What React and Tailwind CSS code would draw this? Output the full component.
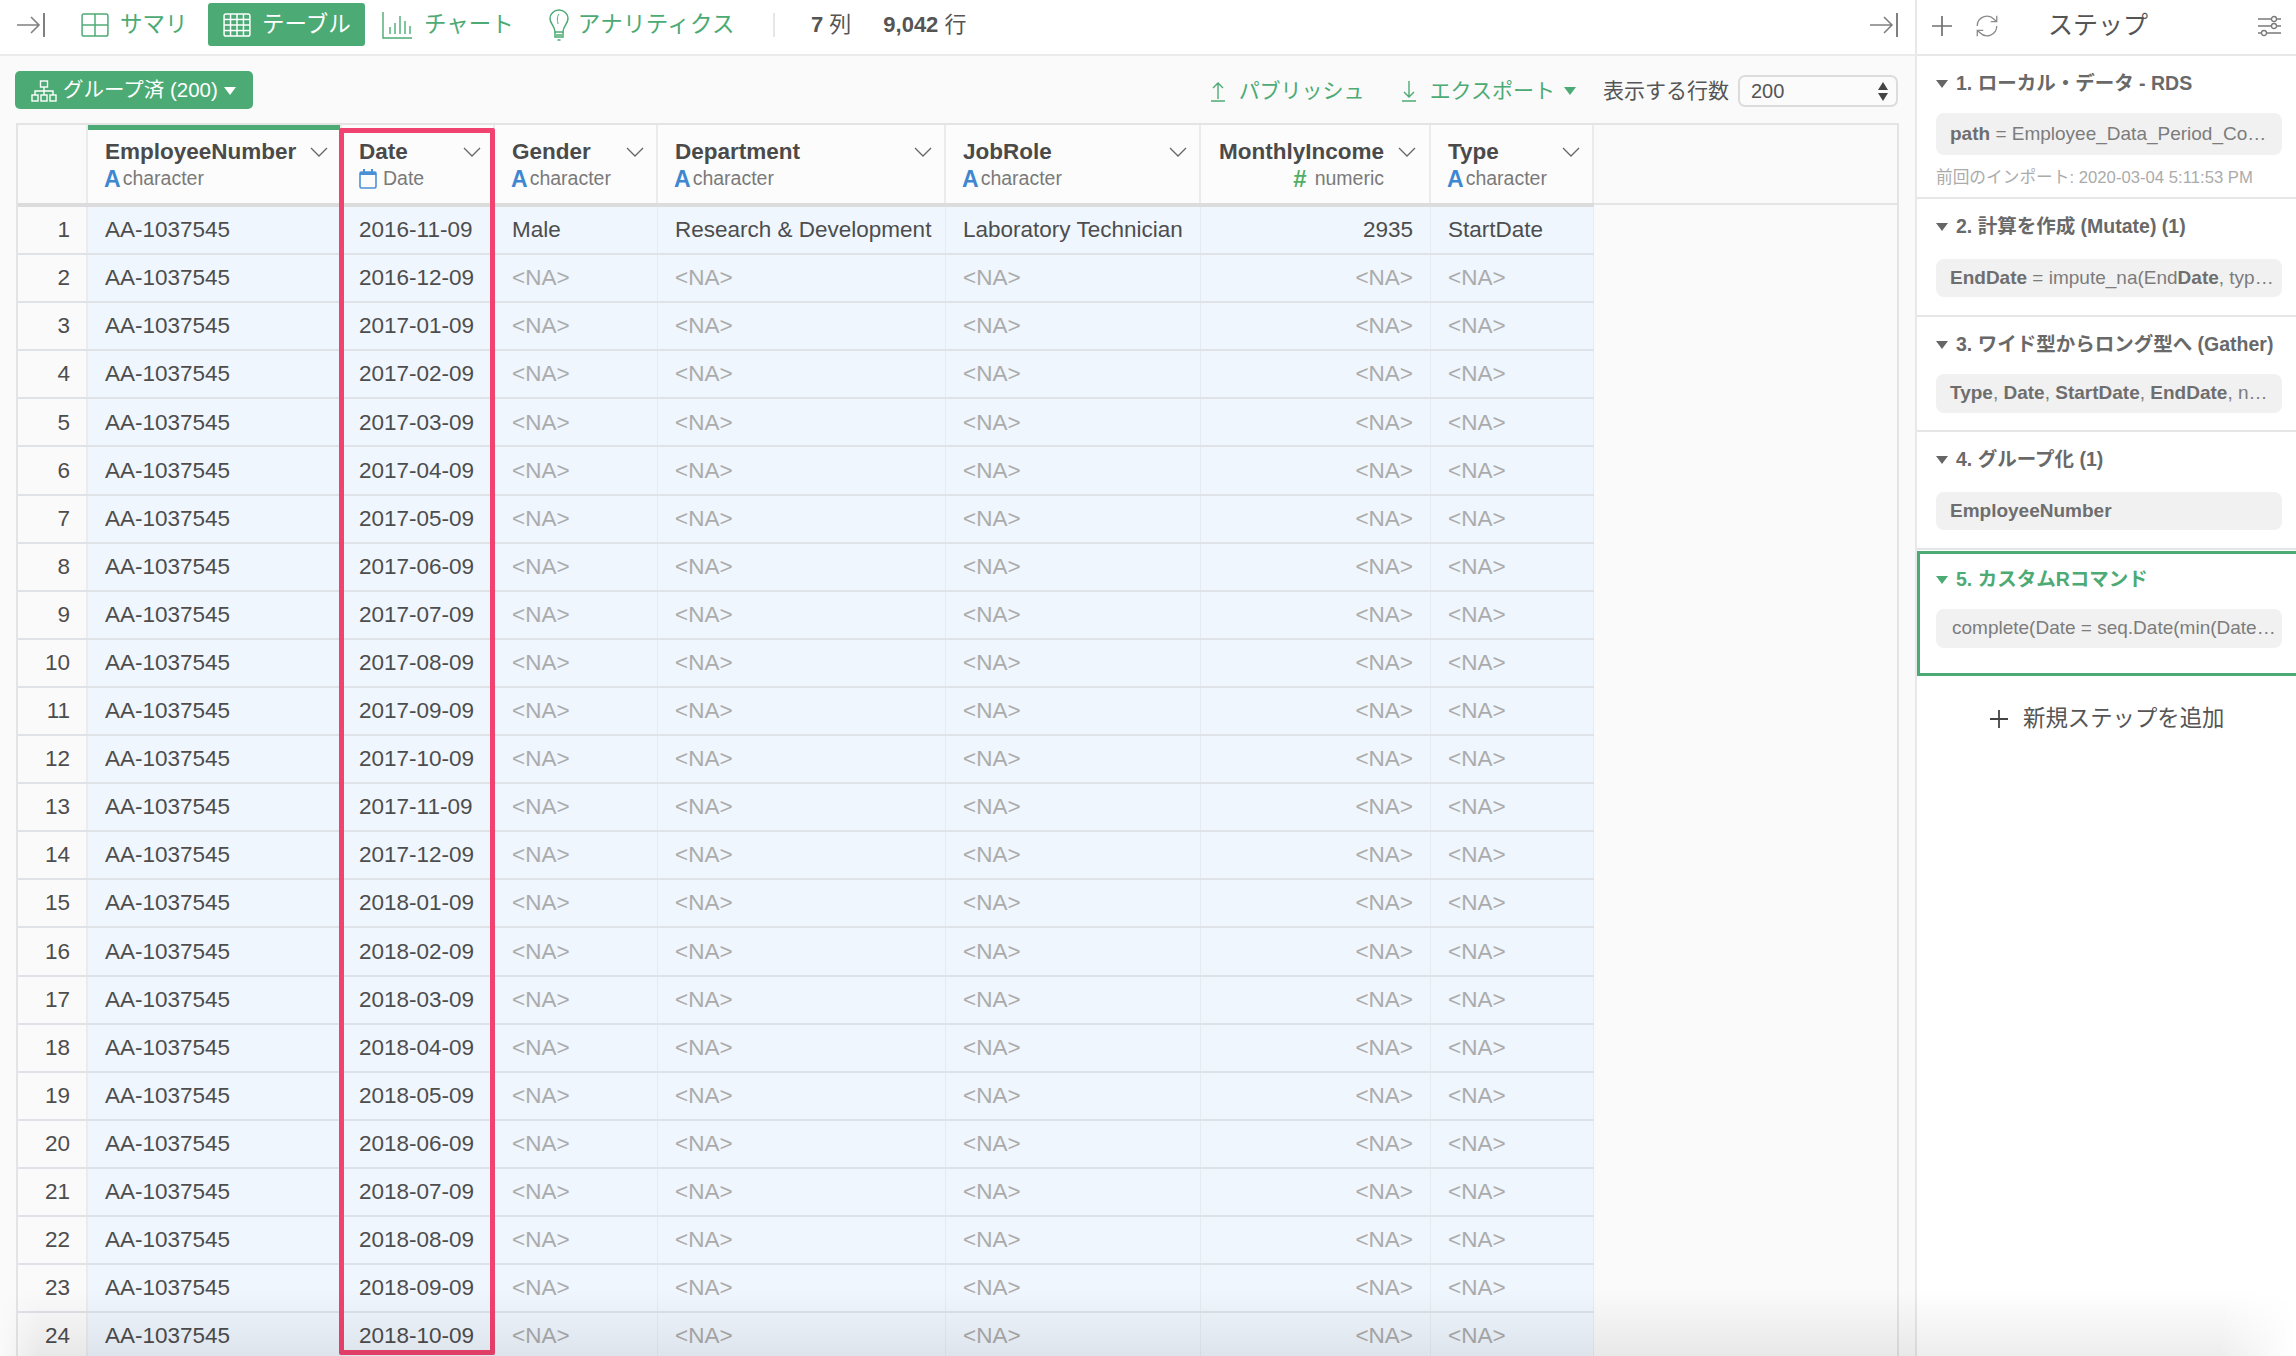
import React from "react";

const GREEN = "#4CAA74";

function ArrowEnd({ className }) {
  return (
    <svg className={className} width="30" height="24" viewBox="0 0 30 24" fill="none" stroke="#808080" strokeWidth="1.6">
      <path d="M1 12H23M15 4l8 8-8 8" />
      <path d="M28 0V24" strokeWidth="2" />
    </svg>
  );
}

function GridIcon({ cols, rows, color, w = 30, h = 26 }) {
  const xs = [...Array(cols - 1)].map((_, i) => ((i + 1) * w) / cols);
  const ys = [...Array(rows - 1)].map((_, i) => ((i + 1) * h) / rows);
  return (
    <svg width={w} height={h} viewBox={`-1 -1 ${w + 2} ${h + 2}`} fill="none" stroke={color} strokeWidth="1.6">
      <rect x="0" y="0" width={w} height={h} rx="2" />
      {xs.map((x) => <path key={x} d={`M${x} 0V${h}`} />)}
      {ys.map((y) => <path key={y} d={`M0 ${y}H${w}`} />)}
    </svg>
  );
}

function ChartIcon() {
  return (
    <svg width="30" height="28" viewBox="0 0 30 28" fill="none" stroke={GREEN} strokeWidth="1.4">
      <path d="M1 1V27H30" />
      <path d="M8 23V16M13 23V12M18 23V5M23 23V10M28 23V15" />
    </svg>
  );
}

function BulbIcon() {
  return (
    <svg width="22" height="32" viewBox="0 0 22 32" fill="none" stroke={GREEN} strokeWidth="1.5">
      <path d="M7 23C7 17 2 15 2 9.500A9 8.500 0 0 1 20 9.500C20 15 15 17 15 23Z" />
      <path d="M7 23V28H15V23M8 26H14M9.500 31H12.500" />
      <path d="M11 5C8.500 8 9.500 12 10 15" strokeWidth="1" />
    </svg>
  );
}

function SitemapIcon() {
  return (
    <svg width="26" height="22" viewBox="0 0 26 22" fill="none" stroke="#fff" strokeWidth="1.4">
      <rect x="9.500" y="1" width="7" height="6" />
      <rect x="1" y="15" width="6" height="6" />
      <rect x="10" y="15" width="6" height="6" />
      <rect x="19" y="15" width="6" height="6" />
      <path d="M13 7V15M4 15V11H22V15" />
    </svg>
  );
}

function Chevron() {
  return (
    <svg width="18" height="10" viewBox="0 0 18 10" fill="none" stroke="#666" strokeWidth="1.3">
      <path d="M1 1l8 8 8-8" />
    </svg>
  );
}

function CalendarIcon() {
  return (
    <svg width="18" height="20" viewBox="0 0 18 20" fill="none" stroke="#4A90D6" strokeWidth="1.6">
      <rect x="1" y="3" width="16" height="16" rx="1.500" />
      <path d="M1 4.500H17" strokeWidth="3" />
      <path d="M5 0V3M13 0V3" strokeWidth="2" />
    </svg>
  );
}

function UpArrow({ down }) {
  return (
    <svg width="18" height="22" viewBox="0 0 18 22" fill="none" stroke={GREEN} strokeWidth="1.4">
      {down ? <path d="M9 1V17M4 12l5 5 5-5M2 21H16" /> : <path d="M9 19V3M4 8l5-5 5 5M2 21H16" />}
    </svg>
  );
}

function Caret({ color }) {
  return <svg width="12" height="8" viewBox="0 0 12 8" fill={color}><path d="M0 0H12L6 8Z" /></svg>;
}

const cols = [
  { name: "EmployeeNumber", type: "character", w: "w-[254px]", active: true },
  { name: "Date", type: "Date", w: "w-[153px]" },
  { name: "Gender", type: "character", w: "w-[163px]" },
  { name: "Department", type: "character", w: "w-[288px]" },
  { name: "JobRole", type: "character", w: "w-[255px]" },
  { name: "MonthlyIncome", type: "numeric", w: "w-[230px]", right: true },
  { name: "Type", type: "character", w: "w-[163px]" },
];

const dates = [
  "2016-11-09", "2016-12-09", "2017-01-09", "2017-02-09", "2017-03-09", "2017-04-09",
  "2017-05-09", "2017-06-09", "2017-07-09", "2017-08-09", "2017-09-09", "2017-10-09",
  "2017-11-09", "2017-12-09", "2018-01-09", "2018-02-09", "2018-03-09", "2018-04-09",
  "2018-05-09", "2018-06-09", "2018-07-09", "2018-08-09", "2018-09-09", "2018-10-09",
];

function HeaderCell({ c }) {
  return (
    <div className={`${c.w} shrink-0 flex flex-col border-r-2 border-[#ebebeb] bg-[#fcfcfc]`}>
      <div className={`h-[5px] ${c.active ? "bg-[#4CAA74]" : ""}`} />
      <div className={`flex flex-col pl-[17px] pt-[6px] ${c.right ? "pr-[45px]" : "pr-[12px]"}`}>
        <div className="relative flex items-center h-[32px]">
          <div className={`text-[22.500px] font-bold text-[#4a4a4a] leading-none ${c.right ? "ml-auto" : ""}`}>{c.name}</div>
          <div className={`absolute top-[11px] ${c.right ? "-right-[32px]" : "right-0"}`}><Chevron /></div>
        </div>
        <div className={`flex items-center h-[22px] text-[19.500px] leading-none text-[#7a7a7a] ${c.right ? "justify-end" : ""}`}>
          {c.type === "character" && <span className="font-bold text-[#3F87D0] text-[23px] -ml-[1px] mr-[2px]">A</span>}
          {c.type === "numeric" && <span className="font-bold text-[#4FAF64] text-[24px] mr-[8px]">#</span>}
          {c.type === "Date" && <span className="mr-[6px] flex"><CalendarIcon /></span>}
          <span>{c.type}</span>
        </div>
      </div>
    </div>
  );
}

function Row({ n, date }) {
  const first = n === 1;
  const na = <span className="text-[#ababab]">&lt;NA&gt;</span>;
  const cell = "shrink-0 h-full flex items-center px-[17px] border-r border-[#e6ebf2]";
  return (
    <div className="flex h-[48.100px] border-b-2 border-[#dfe2e6] text-[22.500px] text-[#4d4d4d] bg-[#EFF6FE]">
      <div className="w-[70px] shrink-0 h-full flex items-center justify-end pr-[16px] bg-[#fafafa] border-r-2 border-[#ececec]">{n}</div>
      <div className={`${cell} w-[254px]`}>AA-1037545</div>
      <div className={`${cell} w-[153px]`}>{date}</div>
      <div className={`${cell} w-[163px]`}>{first ? "Male" : na}</div>
      <div className={`${cell} w-[288px] whitespace-nowrap`}>{first ? "Research & Development" : na}</div>
      <div className={`${cell} w-[255px] whitespace-nowrap`}>{first ? "Laboratory Technician" : na}</div>
      <div className={`${cell} w-[230px] justify-end`}>{first ? "2935" : na}</div>
      <div className={`${cell} w-[163px]`}>{first ? "StartDate" : na}</div>
    </div>
  );
}

function Step({ title, children, h, mb }) {
  return (
    <div className={`${h} shrink-0 pl-[19px] pr-[15px] border-b-2 border-[#e6e6e6]`}>
      <div className={`flex items-center h-[30px] mt-[13px] ${mb} text-[19.500px] font-bold text-[#696969] whitespace-nowrap`}>
        <span className="mr-[8px] flex"><Caret color="#666" /></span>
        {title}
      </div>
      {children}
    </div>
  );
}

function Chip({ children, h }) {
  return (
    <div className={`${h} w-[346px] rounded-[8px] bg-[#f1f1f1] flex items-center pl-[14px] pr-[4px] text-[19px] text-[#7c7c7c] whitespace-nowrap overflow-hidden`}>
      {children}
    </div>
  );
}

export default function App() {
  return (
    <div className="relative w-[2296px] h-[1356px] overflow-hidden flex bg-white font-['Liberation_Sans','Noto_Sans_CJK_JP',sans-serif]">
      <div className="w-[1915px] shrink-0 flex flex-col bg-[#fafafa]">
        {/* toolbar */}
        <div className="h-[56px] shrink-0 bg-white border-b-2 border-[#ebebeb] flex items-center text-[22.500px] text-[#4CAA74] pl-[16px] pr-[16px] pb-[5px]">
          <ArrowEnd />
          <span className="ml-[35px] flex"><GridIcon cols={2} rows={2} color={GREEN} w={28} h={24} /></span>
          <span className="ml-[11px] w-[88px]">サマリ</span>
          <div className="h-[43px] w-[157px] rounded-[3px] bg-[#4CAA74] text-white flex items-center pl-[15px] whitespace-nowrap">
            <GridIcon cols={4} rows={4} color="#fff" w={28} h={24} />
            <span className="ml-[11px]">テーブル</span>
          </div>
          <span className="ml-[17px] flex"><ChartIcon /></span>
          <span className="ml-[12px]">チャート</span>
          <span className="ml-[34px] flex"><BulbIcon /></span>
          <span className="ml-[8px] tracking-[0.3px]">アナリティクス</span>
          <div className="ml-[38px] w-[2px] h-[24px] bg-[#e6e6e6]" />
          <span className="ml-[36px] text-[#555] font-bold text-[22px] whitespace-nowrap">7 <span className="font-normal">列</span></span>
          <span className="ml-[32px] text-[#555] font-bold text-[22px] whitespace-nowrap">9,042 <span className="font-normal">行</span></span>
          <ArrowEnd className="ml-auto" />
        </div>
        {/* sub bar */}
        <div className="h-[67px] shrink-0 flex items-center pl-[15px] pr-[17px] pt-[3px] text-[21px] text-[#4CAA74]">
          <div className="h-[38px] w-[238px] mb-[3px] pt-[2px] rounded-[5px] bg-[#4CAA74] text-white text-[20.500px] flex items-center pl-[16px] whitespace-nowrap">
            <SitemapIcon />
            <span className="ml-[6px]">グループ済 (200)</span>
            <span className="ml-[6px] flex"><Caret color="#fff" /></span>
          </div>
          <span className="ml-auto flex"><UpArrow /></span>
          <span className="ml-[12px]">パブリッシュ</span>
          <span className="ml-[35px] flex"><UpArrow down /></span>
          <span className="ml-[12px]">エクスポート</span>
          <span className="ml-[9px] flex"><Caret color={GREEN} /></span>
          <span className="ml-[27px] text-[#555] text-[21px]">表示する行数</span>
          <div className="ml-[9px] h-[32px] w-[160px] rounded-[7px] border-2 border-[#dcdcdc] bg-[#fbfbfb] flex items-center justify-between pl-[11px] pr-[8px] text-[20px] text-[#555]">
            200
            <span className="flex flex-col gap-[3px]">
              <svg width="10" height="8" viewBox="0 0 10 8" fill="#444"><path d="M0 8H10L5 0Z" /></svg>
              <svg width="10" height="8" viewBox="0 0 10 8" fill="#444"><path d="M0 0H10L5 8Z" /></svg>
            </span>
          </div>
        </div>
        {/* table */}
        <div className="relative ml-[16px] w-[1883px] flex-1 border-x-2 border-t-2 border-[#e4e4e4] bg-[#fafafa] overflow-hidden">
          <div className="flex h-[80px] border-b-2 border-[#e4e4e4]">
            <div className="w-[70px] shrink-0 border-r-2 border-[#ebebeb] bg-[#fafafa]" />
            {cols.map((c) => <HeaderCell key={c.name} c={c} />)}
          </div>
          <div className="w-[1576px] -mt-[2px] border-t-4 border-[#dcdcdc]">
            {dates.map((d, i) => <Row key={d} n={i + 1} date={d} />)}
          </div>
          {/* selected column highlight */}
          <div className="absolute left-[321px] top-[3px] w-[156px] h-[1227px] border-[5px] border-[#F0436F] rounded-[2px] pointer-events-none" />
        </div>
      </div>
      {/* step panel */}
      <div className="flex-1 flex flex-col border-l-2 border-[#e8e8e8]">
        <div className="h-[56px] shrink-0 border-b-2 border-[#e8e8e8] flex items-center pl-[14px] pr-[16px] pb-[2px] text-[#555]">
          <svg width="22" height="22" viewBox="0 0 22 22" fill="none" stroke="#707070" strokeWidth="1.7"><path d="M11 1V21M1 11H21" /></svg>
          <svg className="ml-[21px]" width="26" height="26" viewBox="0 0 24 24" fill="none" stroke="#8a8a8a" strokeWidth="1.200">
            <path d="M3 12a9 9 0 0 1 15.500-6.200L21 8M21 2.500V8h-5.500M21 12a9 9 0 0 1-15.500 6.200L3 16M3 21.500V16h5.500" />
          </svg>
          <span className="ml-[48px] text-[25px] text-[#555]">ステップ</span>
          <svg className="ml-auto" width="24" height="22" viewBox="0 0 24 22" fill="none" stroke="#7a7a7a" strokeWidth="1.300">
            <path d="M1 4H24M1 11H24M1 18H24" />
            <circle cx="17" cy="4" r="2.500" fill="#fff" />
            <circle cx="17" cy="11" r="2.500" fill="#fff" />
            <circle cx="7" cy="18" r="2.500" fill="#fff" />
          </svg>
        </div>
        <Step title="1. ローカル・データ - RDS" h="h-[143px]" mb="mb-[14px]">
          <Chip h="h-[42px]"><b className="text-[#6e6e6e]">path</b>&nbsp;= Employee_Data_Period_Co…</Chip>
          <div className="mt-[12px] text-[16.700px] leading-[22px] text-[#ababab] whitespace-nowrap">前回のインポート: 2020-03-04 5:11:53 PM</div>
        </Step>
        <Step title="2. 計算を作成 (Mutate) (1)" h="h-[118px]" mb="mb-[17px]">
          <Chip h="h-[38px]"><b className="text-[#6e6e6e]">EndDate</b>&nbsp;= impute_na(End<b className="text-[#6e6e6e]">Date</b>, typ…</Chip>
        </Step>
        <Step title="3. ワイド型からロング型へ (Gather)" h="h-[115px]" mb="mb-[14px]">
          <Chip h="h-[39px]"><b className="text-[#6e6e6e]">Type</b>,&nbsp;<b className="text-[#6e6e6e]">Date</b>,&nbsp;<b className="text-[#6e6e6e]">StartDate</b>,&nbsp;<b className="text-[#6e6e6e]">EndDate</b>, n…</Chip>
        </Step>
        <Step title="4. グループ化 (1)" h="h-[118px]" mb="mb-[17px]">
          <Chip h="h-[38px]"><b className="text-[#6e6e6e]">EmployeeNumber</b></Chip>
        </Step>
        <div className="mt-[1px] h-[125px] shrink-0 border-[3px] border-r-0 border-[#4CAA74] pl-[16px] pr-[15px]">
          <div className="flex items-center h-[30px] mt-[11px] mb-[14px] text-[19.500px] font-bold text-[#4CAA74] whitespace-nowrap">
            <span className="mr-[8px] flex"><Caret color={GREEN} /></span>
            5. カスタムRコマンド
          </div>
          <Chip h="h-[39px]"><span className="pl-[2px]">complete(Date = seq.Date(min(Date…</span></Chip>
        </div>
        <div className="mt-[28px] h-[30px] flex items-center pl-[73px] text-[22.400px] text-[#555] whitespace-nowrap">
          <svg width="18" height="18" viewBox="0 0 18 18" fill="none" stroke="#444" strokeWidth="1.800"><path d="M9 0V18M0 9H18" /></svg>
          <span className="ml-[15px]">新規ステップを追加</span>
        </div>
      </div>
      {/* bottom fade of the screenshot */}
      <div className="absolute left-0 right-0 bottom-0 h-[66px] pointer-events-none bg-linear-to-t from-black/[0.07] to-transparent [mask-image:linear-gradient(to_right,transparent,black_40px,black_2220px,transparent)]" />
    </div>
  );
}
